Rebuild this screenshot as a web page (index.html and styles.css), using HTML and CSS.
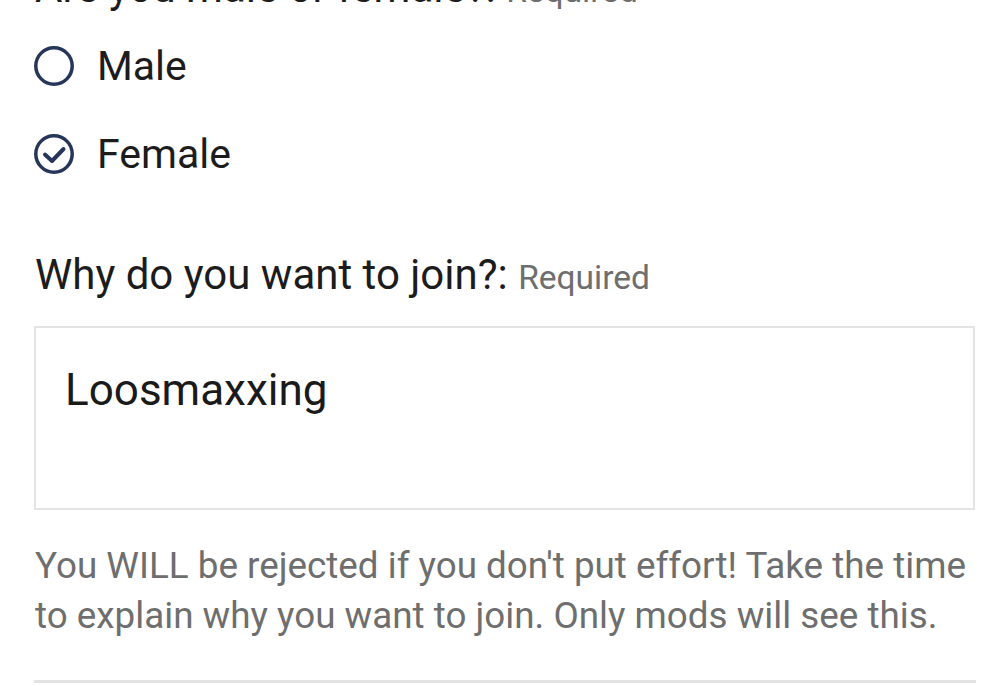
FILE: index.html
```html
<!DOCTYPE html>
<html>
<head>
<meta charset="utf-8">
<link rel="stylesheet" href="styles.css">
</head>
<body>
<div class="page">
  <div class="shade"></div>
  <div class="label top-label">Are you male or female?: <span class="req">Required</span></div>
  <div class="options">
    <div class="option">
      <svg class="radio" viewBox="0 0 40 40" width="40" height="40"><circle cx="20" cy="20" r="18.2" fill="none" stroke="#26365a" stroke-width="3.5"/></svg>
      <span class="opt-text">Male</span>
    </div>
    <div class="option">
      <svg class="radio" viewBox="0 0 40 40" width="40" height="40"><circle cx="20" cy="20" r="18.2" fill="none" stroke="#26365a" stroke-width="3.5"/><path d="M11 20.5 L18 27 L29.5 15" fill="none" stroke="#26365a" stroke-width="4" stroke-linecap="round" stroke-linejoin="round"/></svg>
      <span class="opt-text">Female</span>
    </div>
  </div>
  <div class="label why-label">Why do you want to join?: <span class="req">Required</span></div>
  <div class="answer">Loosmaxxing</div>
  <p class="helper">You WILL be rejected if you don't put effort! Take the time to explain why you want to join. Only mods will see this.</p>
  <div class="divider"></div>
</div>
</body>
</html>
```
FILE: styles.css
```css
html, body {
  margin: 0;
  padding: 0;
  background: #ffffff;
}
body {
  font-family: Roboto, "Liberation Sans", sans-serif;
  color: #1b1b1b;
  overflow: hidden;
  height: 686px;
}
.page {
  position: relative;
  padding: 0 25px 0 35px;
}
.shade {
  position: absolute;
  left: 0;
  top: 0;
  width: 100%;
  height: 30px;
  background: linear-gradient(to bottom, rgba(215,215,215,0.85), rgba(255,255,255,0));
  z-index: 2;
}
.label {
  font-size: 42px;
  line-height: 50px;
  color: #1c1c1c;
  white-space: nowrap;
}
.req {
  font-size: 33.5px;
  color: #6e6e6e;
}
.top-label {
  margin-top: -37px;
}
.options {
  margin-top: 6px;
  display: flex;
  flex-direction: column;
}
.option {
  height: 88px;
  display: flex;
  align-items: center;
  gap: 23px;
}
.radio {
  flex: none;
  margin-left: -1px;
}
.opt-text {
  font-size: 41px;
  color: #1c1c1c;
}
.why-label {
  margin-top: 52px;
}
.answer {
  margin-top: 23px;
  box-sizing: border-box;
  width: 941px;
  height: 184px;
  margin-left: -1px;
  border: 2px solid #e4e4e4;
  padding: 37px 0 0 29px;
  font-size: 44px;
  line-height: 50px;
  color: #1a1a1a;
}
.helper {
  margin: 31px 0 0 0;
  font-size: 36.8px;
  line-height: 50px;
  color: #6e6e6e;
}
.divider {
  margin-top: 39px;
  width: 942px;
  margin-left: -1px;
  height: 3px;
  background: #e2e2e2;
}
```
